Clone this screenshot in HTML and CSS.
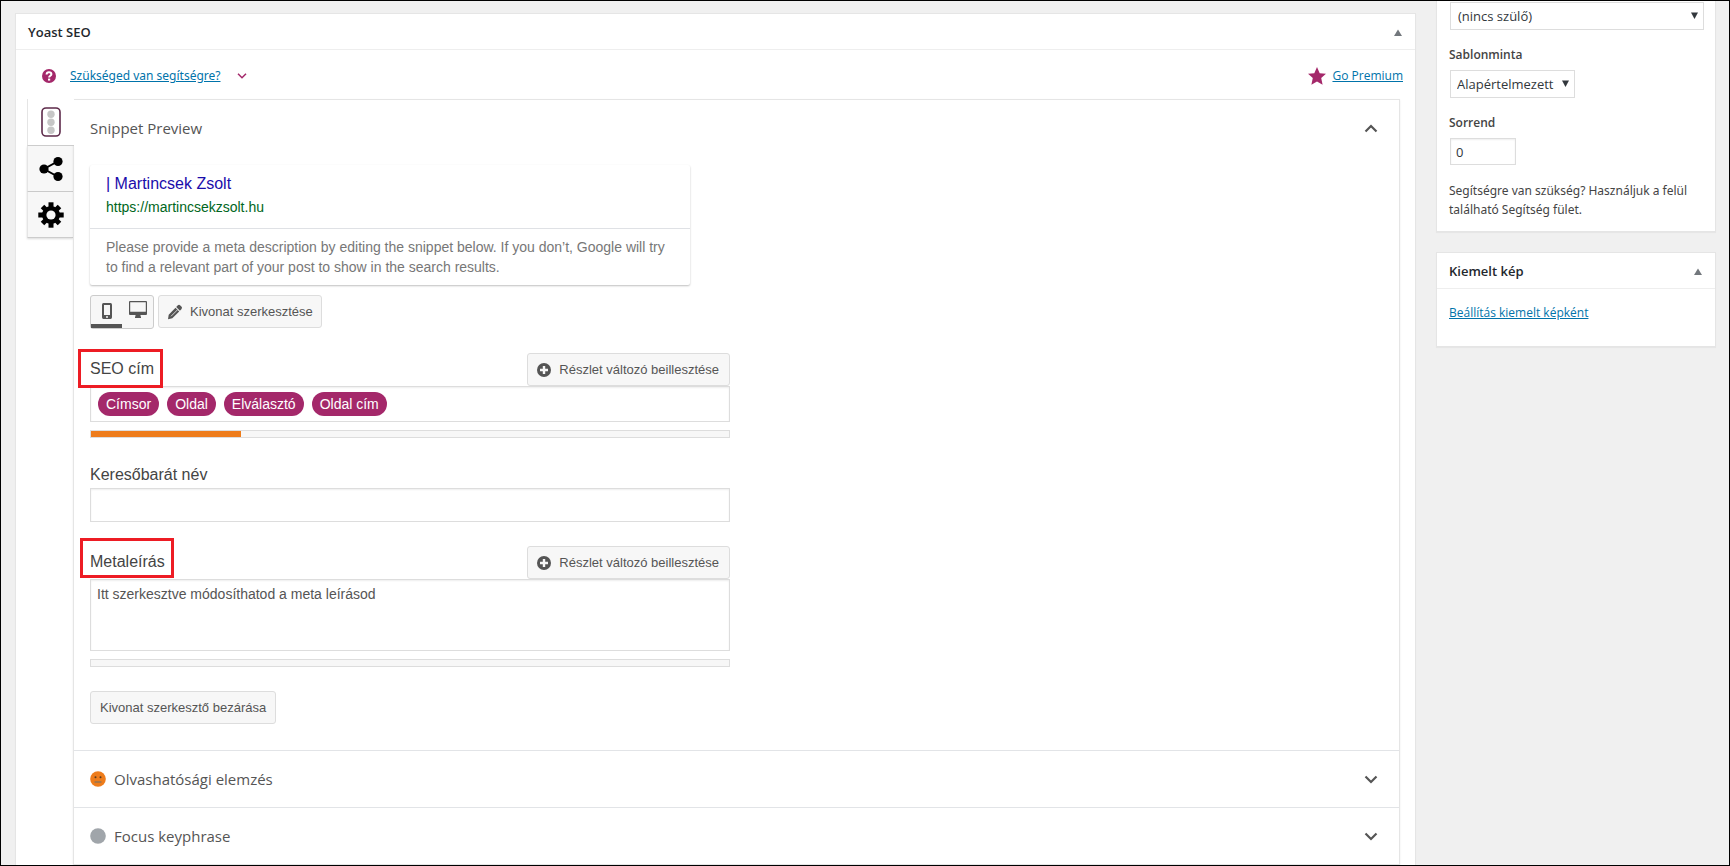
FILE: index.html
```html
<!DOCTYPE html>
<html lang="hu">
<head>
<meta charset="utf-8">
<title>Yoast SEO</title>
<link rel="stylesheet" href="styles.css">
</head>
<body>
<div class="screen">
  <main class="postbox yoast">
    <header class="postbox-head">
      <h2>Yoast SEO</h2>
      <button class="toggle" type="button" aria-label="Panel összecsukása"><svg width="8" height="7" viewBox="0 0 8 7"><path d="M4 0.500 8 7H0z"/></svg></button>
    </header>
    <div class="helpbar">
      <div class="help">
        <svg class="brand" width="14" height="14" viewBox="0 0 14 14"><circle cx="7" cy="7" r="7" fill="currentColor"/><path d="M4.600 5.600C4.600 3.900 5.600 3.200 7 3.200s2.400.7 2.400 2C9.400 6.800 7.100 6.800 7.100 8.600" fill="none" stroke="#fff" stroke-width="2"/><rect x="6" y="9.600" width="2.200" height="2" fill="#fff"/></svg>
        <a href="#">Szükséged van segítségre?</a>
        <svg class="brand" width="10" height="6" viewBox="0 0 10 6"><path d="M1 0.800 5 4.800 9 0.800" fill="none" stroke="currentColor" stroke-width="1.500"/></svg>
      </div>
      <div class="premium">
        <svg class="brand" width="18" height="18" viewBox="0 0 18 18"><path d="M9 0 11.700 6.200 18 6.800 13.200 11.100 14.600 17.800 9 14.400 3.400 17.800 4.800 11.100 0 6.800 6.300 6.200z" fill="currentColor"/></svg>
        <a href="#">Go Premium</a>
      </div>
    </div>
    <div class="workspace">
      <nav class="tabs">
        <button class="tab active" type="button" aria-label="SEO"><svg width="20" height="30" viewBox="0 0 20 30"><rect x="1" y="1" width="18" height="28" rx="4" fill="#fff" stroke="#5d2a4a" stroke-width="1.600"/><g fill="#c6c6c6"><circle cx="10" cy="7.200" r="3.700"/><circle cx="10" cy="15.200" r="3.700"/><circle cx="10" cy="23.200" r="3.700"/></g></svg></button>
        <button class="tab" type="button" aria-label="Megosztás"><svg width="26" height="26" viewBox="0 0 26 26"><path d="M19.500 5.500 6 13l13.500 7.500" fill="none" stroke="#000" stroke-width="2"/><circle cx="20" cy="5.500" r="4.600"/><circle cx="6" cy="13" r="4.600"/><circle cx="20" cy="20.500" r="4.600"/></svg></button>
        <button class="tab" type="button" aria-label="Beállítások"><svg width="26" height="26" viewBox="0 0 26 26"><rect x="10.500" y="0.300" width="5" height="25.400"/><rect x="0.300" y="10.500" width="25.400" height="5"/><rect x="10.500" y="1" width="5" height="24" transform="rotate(45 13 13)"/><rect x="10.500" y="1" width="5" height="24" transform="rotate(-45 13 13)"/><circle cx="13" cy="13" r="9"/><circle cx="13" cy="13" r="4.600" fill="#f7f7f7"/></svg></button>
      </nav>
      <div class="sections">
        <section class="section">
          <button class="section-head" type="button"><span>Snippet Preview</span><svg width="14" height="9" viewBox="0 0 14 9"><path d="M1.500 7.500 7 2l5.500 5.500"/></svg></button>
          <div class="editor">
            <article class="snippet">
              <div class="snippet-top">
                <a class="snippet-title" href="#">| Martincsek Zsolt</a>
                <cite class="snippet-url">https://martincsekzsolt.hu</cite>
              </div>
              <p class="snippet-desc">Please provide a meta description by editing the snippet below. If you don’t, Google will try to find a relevant part of your post to show in the search results.</p>
            </article>
            <div class="tools">
              <div class="modes">
                <button class="mode selected" type="button" aria-label="Mobil nézet"><svg width="10" height="16" viewBox="0 0 10 16"><path fill-rule="evenodd" d="M1.800 0h6.400A1.700 1.700 0 0 1 10 1.700v12.600A1.700 1.700 0 0 1 8.200 16H1.800A1.700 1.700 0 0 1 0 14.300V1.700A1.700 1.700 0 0 1 1.800 0zM2 2v10h6V2zM4 13.200v1.500h2v-1.500z"/></svg></button>
                <button class="mode" type="button" aria-label="Asztali nézet"><svg width="18" height="18" viewBox="0 0 18 18"><path fill-rule="evenodd" d="M1 0h16a1 1 0 0 1 1 1v12a1 1 0 0 1-1 1h-5.500v1.500H12V17H6v-1.500h.5V14H1a1 1 0 0 1-1-1V1a1 1 0 0 1 1-1zm.2 1.200v9.600h15.600V1.200z"/></svg></button>
              </div>
              <button class="btn edit" type="button"><svg width="16" height="16" viewBox="0 0 16 16"><path d="M10.600 1.600q1.300-1.400 2.700-.2l1.100 1.100q1.300 1.300 0 2.700L12.900 6.700 9.200 3zM8.500 3.700l3.700 3.700-6.900 6.900L1 15.200l.7-4.500z"/><path d="M4 12.300 10.500 5.800" stroke="#f7f7f7" stroke-width=".8"/></svg>Kivonat szerkesztése</button>
            </div>
            <div class="field">
              <div class="field-head">
                <span class="label marked marked-title" id="seo-title">SEO cím</span>
                <button class="btn" type="button"><svg width="14" height="14" viewBox="0 0 14 14"><circle cx="7" cy="7" r="7"/><path d="M7 3v8M3 7h8" stroke="#f7f7f7" stroke-width="2.400"/></svg>Részlet változó beillesztése</button>
              </div>
              <div class="chips" role="textbox" contenteditable="true" aria-labelledby="seo-title" spellcheck="false"><span class="chip">Címsor</span><span class="chip">Oldal</span><span class="chip">Elválasztó</span><span class="chip">Oldal cím</span></div>
              <div class="meter"><div class="meter-fill" style="width:23.5%"></div></div>
            </div>
            <div class="field slug">
              <label class="label" for="slug">Keresőbarát név</label>
              <input class="text" id="slug" type="text">
            </div>
            <div class="field">
              <div class="field-head">
                <label class="label marked marked-meta" for="meta">Metaleírás</label>
                <button class="btn" type="button"><svg width="14" height="14" viewBox="0 0 14 14"><circle cx="7" cy="7" r="7"/><path d="M7 3v8M3 7h8" stroke="#f7f7f7" stroke-width="2.400"/></svg>Részlet változó beillesztése</button>
              </div>
              <textarea class="text area" id="meta" spellcheck="false">Itt szerkesztve módosíthatod a meta leírásod</textarea>
              <div class="meter"></div>
            </div>
            <button class="btn close" type="button">Kivonat szerkesztő bezárása</button>
          </div>
        </section>
        <section class="section">
          <button class="section-head" type="button"><svg class="face" width="16" height="16" viewBox="0 0 16 16"><circle cx="8" cy="8" r="7.800" fill="#ee7c1b"/><g fill="#5a3b1e"><circle cx="5.500" cy="6.300" r="1"/><circle cx="10.500" cy="6.300" r="1"/></g><rect x="4.500" y="10" width="7" height="2" fill="#a97646"/></svg><span>Olvashatósági elemzés</span><svg width="14" height="9" viewBox="0 0 14 9"><path d="M1.500 1.500 7 7l5.500-5.500"/></svg></button>
        </section>
        <section class="section">
          <button class="section-head" type="button"><svg class="face" width="16" height="16" viewBox="0 0 16 16"><circle cx="8" cy="8" r="7.800" fill="#a0a5aa"/></svg><span>Focus keyphrase</span><svg width="14" height="9" viewBox="0 0 14 9"><path d="M1.500 1.500 7 7l5.500-5.500"/></svg></button>
        </section>
      </div>
    </div>
  </main>
  <aside class="side">
    <section class="postbox attributes">
      <div class="pick wide"><select aria-label="Szülő"><option>(nincs szülő)</option></select><svg width="7" height="7" viewBox="0 0 7 7"><path d="M0 0.500h7L3.500 7z"/></svg></div>
      <label class="side-label" for="template">Sablonminta</label>
      <div class="pick"><select id="template"><option>Alapértelmezett</option></select><svg width="7" height="7" viewBox="0 0 7 7"><path d="M0 0.500h7L3.500 7z"/></svg></div>
      <label class="side-label" for="order">Sorrend</label>
      <input class="order" id="order" type="text" value="0">
      <p>Segítségre van szükség? Használjuk a felül található Segítség fület.</p>
    </section>
    <section class="postbox">
      <header class="postbox-head">
        <h2>Kiemelt kép</h2>
        <button class="toggle" type="button" aria-label="Panel összecsukása"><svg width="8" height="7" viewBox="0 0 8 7"><path d="M4 0.500 8 7H0z"/></svg></button>
      </header>
      <div class="featured"><a href="#">Beállítás kiemelt képként</a></div>
    </section>
  </aside>
</div>
</body>
</html>
```
FILE: styles.css
```css
* { box-sizing: border-box; }

body {
  margin: 0;
  background: #f0f0f0;
  color: #444;
  font: 12px/19px "Open Sans", "Noto Sans", sans-serif;
}

svg { display: block; flex: none; }
a { color: #0073aa; }
button { margin: 0; padding: 0; border: 0; background: none; color: inherit; cursor: pointer; }

.screen {
  display: grid;
  grid-template-columns: minmax(0, 1fr) 280px;
  align-items: start;
  gap: 20px;
  height: 100vh;
  padding: 0 13px 0 14px;
  border: 1px solid #000;
  overflow: hidden;
}

.postbox {
  border: 1px solid #e5e5e5;
  background: #fff;
  box-shadow: 0 1px 1px rgba(0, 0, 0, 0.04);
}

.postbox-head {
  display: flex;
  align-items: center;
  justify-content: space-between;
  height: 36px;
  padding: 1px 13px 0 12px;
  border-bottom: 1px solid #eee;
}
.postbox-head h2 { margin: 0; color: #23282d; font-size: 13px; font-weight: 600; }
.toggle svg { fill: #72777c; }

.yoast { margin-top: 12px; }
.brand { color: #a4286a; }

.helpbar {
  display: flex;
  align-items: center;
  justify-content: space-between;
  height: 49px;
  padding: 2px 12px 0 26px;
}
.help, .premium { display: flex; align-items: center; }
.help { gap: 16px; }
.help a { margin-left: -2px; }
.help a, .attributes p { font-family: "Noto Sans", "Open Sans", sans-serif; }
.premium { gap: 6px; }

.workspace { display: flex; align-items: stretch; padding: 0 15px 0 11px; }

.tabs { display: flex; flex-direction: column; width: 46px; flex: none; }
.tab {
  display: flex;
  align-items: center;
  justify-content: center;
  height: 46px;
  border-bottom: 1px solid #ccc;
  border-left: 1px solid #e5e5e5;
  background: #f7f7f7;
  box-shadow: 0 1px 2px rgba(0, 0, 0, 0.15);
}
.tab.active {
  position: relative;
  height: 47px;
  margin-right: -1px;
  padding-right: 1px;
  background: #fff;
  box-shadow: none;
}

.sections {
  flex: 1;
  min-width: 0;
  border: 1px solid #e5e5e5;
  box-shadow: 0 1px 2px rgba(0, 0, 0, 0.08);
}
.section + .section { border-top: 1px solid #e2e4e7; }

.section-head {
  display: flex;
  align-items: center;
  gap: 8px;
  width: 100%;
  height: 56px;
  padding: 0 21px 0 16px;
  color: #555;
  font: 15px/24px "Open Sans", "Noto Sans", sans-serif;
  text-align: left;
}
.section-head span { flex: 1; }
.section-head svg:last-child { fill: none; stroke: #555; stroke-width: 2.2; }

.editor {
  display: flex;
  flex-direction: column;
  max-width: 656px;
  padding: 9px 0 26px 16px;
  font-family: "Liberation Sans", Arial, sans-serif;
}

.snippet {
  width: 600px;
  max-width: 100%;
  border-radius: 2px;
  box-shadow: 0 1px 2px rgba(0, 0, 0, 0.25);
}
.snippet-top {
  display: flex;
  flex-direction: column;
  align-items: flex-start;
  height: 64px;
  padding: 8px 16px 0;
  border-bottom: 1px solid #dfe1e5;
}
.snippet-title { color: #1a0dab; font-size: 16px; line-height: 22px; text-decoration: none; }
.snippet-url { color: #006621; font-size: 14px; line-height: 24px; font-style: normal; }
.snippet-desc { margin: 0; padding: 8px 16px; color: #777; font-size: 14px; line-height: 20px; }

.tools { display: flex; align-items: flex-start; gap: 4px; margin-top: 10px; }
.modes {
  display: flex;
  height: 34px;
  border: 1px solid #ccc;
  border-radius: 3px;
  background: #f7f7f7;
}
.mode {
  display: flex;
  justify-content: center;
  align-items: flex-start;
  width: 31px;
  padding-top: 5px;
  border-bottom: 4px solid transparent;
}
.mode.selected { padding-top: 7px; border-color: #555; }
.mode svg, .btn svg { fill: #555; }

.btn {
  display: flex;
  align-items: center;
  gap: 8px;
  height: 33px;
  padding: 0 10px 0 9px;
  border: 1px solid #ddd;
  border-radius: 3px;
  background: #f7f7f7;
  color: #555;
  font: 13px/19px "Liberation Sans", Arial, sans-serif;
}
.edit { gap: 7px; padding: 0 8px; }
.close { align-self: flex-start; margin-top: 24px; padding: 0 9px; }

.field { display: flex; flex-direction: column; margin-top: 24px; }
.field-head { display: flex; align-items: center; justify-content: space-between; }
.label { color: #444; font-size: 16px; line-height: 24px; }
.field-head .label { margin-bottom: 2px; }

.marked { position: relative; }
.marked::after { content: ""; position: absolute; border: 3px solid #ed1c24; pointer-events: none; }
.marked-title::after { inset: -8px -9px -7px -12px; }
.marked-meta::after { inset: -12px -9px -4px -10px; }

.chips {
  display: flex;
  align-items: center;
  gap: 8px;
  height: 36px;
  padding: 0 7px;
  border: 1px solid #ddd;
  box-shadow: inset 0 1px 2px rgba(0, 0, 0, 0.07);
}
.chip {
  padding: 0 8px;
  border-radius: 12px;
  background: #a4286a;
  color: #fff;
  font-size: 14px;
  line-height: 24px;
}

.meter { height: 8px; margin-top: 8px; border: 1px solid #ddd; background: #f7f7f7; }
.meter-fill { height: 100%; background: #ee7c1b; }

.text {
  height: 34px;
  padding: 4px 6px;
  border: 1px solid #ddd;
  box-shadow: inset 0 1px 2px rgba(0, 0, 0, 0.07);
  color: #555;
  font: 14px/20px "Liberation Sans", Arial, sans-serif;
}
.slug { margin-top: 25px; }
.slug .label { margin-bottom: 1px; }
.area { height: 72px; resize: none; overflow: hidden; }

.side { display: flex; flex-direction: column; gap: 20px; }
.attributes {
  display: flex;
  flex-direction: column;
  align-items: flex-start;
  padding: 1px 12px 12px;
  border-top: 0;
}
.pick { position: relative; margin-left: 1px; }
.pick.wide { align-self: stretch; margin-right: -1px; }
.pick svg { position: absolute; top: 10px; right: 6px; fill: #32373c; pointer-events: none; }
.pick select {
  appearance: none;
  width: 100%;
  height: 28px;
  padding: 0 20px 0 6px;
  border: 1px solid #ddd;
  border-radius: 0;
  background: #fff;
  color: #32373c;
  font: 13px/20px "Open Sans", "Noto Sans", sans-serif;
}
.pick.wide select { padding-left: 7px; }
.side-label { margin: 15px 0 6px; font-weight: 600; line-height: 19px; }
.order {
  width: 66px;
  height: 27px;
  margin-left: 1px;
  padding: 0 5px;
  border: 1px solid #ddd;
  box-shadow: inset 0 1px 2px rgba(0, 0, 0, 0.07);
  color: #32373c;
  font: 13px/20px "Open Sans", "Noto Sans", sans-serif;
}
.attributes p { margin: 16px 0 0; }
.featured { padding: 14px 12px 24px; }
```
